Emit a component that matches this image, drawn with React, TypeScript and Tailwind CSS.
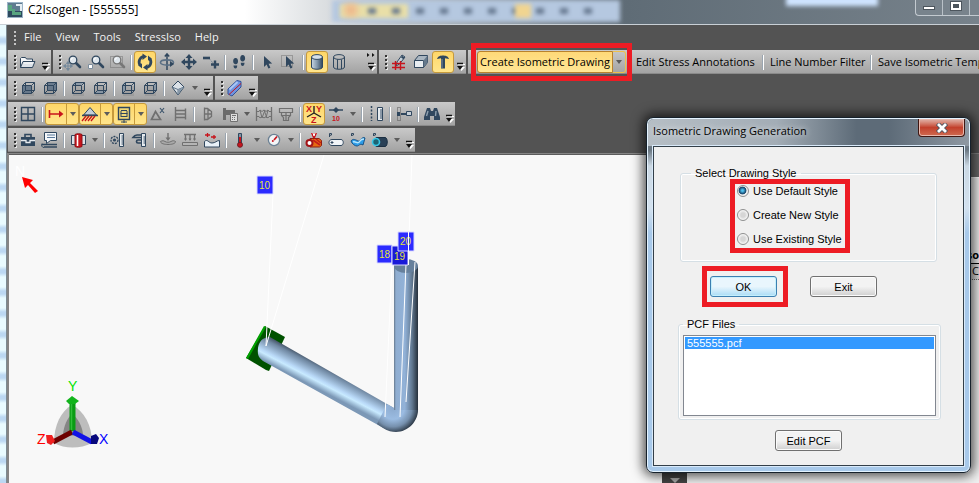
import React from "react";
import type { ReactNode } from "react";

const INK = "#30475e";
const GREY = "#707070";
const RED = "#c8141c";

function Svg({ children }: { children: ReactNode }) {
  return (
    <svg width="22" height="22" viewBox="0 0 22 22" fill="none" aria-hidden="true" className="block shrink-0">
      {children}
    </svg>
  );
}

/* A wire cube whose chosen face is shaded. */
function Cube({ face }: { face: "front" | "back" | "top" | "bottom" | "left" | "right" }) {
  const faces = {
    front: "M5 8h9v9H5z",
    back: "M8 5h9v9H8z",
    top: "M5 8L8 5h9l-3 3z",
    bottom: "M5 17l3-3h9l-3 3z",
    left: "M5 8l3-3v9l-3 3z",
    right: "M14 8l3-3v9l-3 3z",
  };
  return (
    <Svg>
      <path d="M6 9h11v10H6z" fill="#000" opacity=".08" />
      <path d={faces[face]} fill={face === "front" || face === "back" ? "#5d7186" : "#8494a4"} opacity=".85" />
      <path d="M5.500 8.500h9v8h-9zM8.500 5.500h9v8h-9zM5.500 8.500l3-3M14.500 8.500l3-3M14.500 16.500l3-3M5.500 16.500l3-3" stroke={INK} />
    </Svg>
  );
}

const lens = (cx: number, color: string) => (
  <>
    <path d={`M${cx + 3} 12l4 4`} stroke={color} strokeWidth="2.6" strokeLinecap="round" />
    <circle cx={cx} cy="9" r="3.8" fill="#dfe6ec" stroke={color} strokeWidth="1.3" />
    <path d={`M${cx - 2} 9a2 2 0 0 1 2-2`} stroke="#fff" />
  </>
);

const cursorPath = "M8 5v11l2.600-2.400 1.800 4 2-.9-1.800-3.900 3.600-.2z";

const icons: Record<string, ReactNode> = {
  open: (
    <Svg>
      <path d="M3.500 16.500v-9l1-1h4l1 1.500h6v3" fill="#f4f6f8" stroke={INK} />
      <path d="M3.500 16.500l2.500-6h12l-2.500 6z" fill="#dde3e9" stroke={INK} strokeLinejoin="round" />
      <path d="M7 12h9" stroke="#fff" />
    </Svg>
  ),
  zoomPan: (
    <Svg>
      <path d="M6 11v8M2 15h8M6 10.500l-1.500 2h3zM6 19.500l-1.500-2h3zM1.500 15l2-1.500v3zM10.500 15l-2-1.500v3z" stroke="#75899b" fill="#75899b" />
      {lens(11, INK)}
    </Svg>
  ),
  zoomWin: (
    <Svg>
      {lens(12, INK)}
      <path d="M4.500 13.500h4v4h-4z" fill="#fff" stroke="#7d8e9e" />
    </Svg>
  ),
  zoomSel: (
    <Svg>
      <path d="M4.500 5.500h12v11h-12z" stroke={GREY} strokeDasharray="1 1" />
      {lens(11, "#777")}
    </Svg>
  ),
  rotate: (
    <Svg>
      <path d="M6.500 14.500a5.500 5.500 0 0 1 3-9M15.500 7.500a5.500 5.500 0 0 1-3 9" stroke={INK} strokeWidth="2.800" />
      <path d="M8.500 2.500l4.500 3-4.500 3.500zM13.500 19.500l-4.500-3 4.500-3.500zM4 14l4-1.500v5zM18 8l-4 1.500v-5z" fill={INK} />
    </Svg>
  ),
  spin: (
    <Svg>
      <path d="M11 3v16M8.800 5.500L11 3l2.200 2.500" stroke={INK} strokeWidth="1.500" />
      <ellipse cx="11" cy="11.500" rx="6.500" ry="2.600" stroke="#5b7085" strokeWidth="1.600" />
      <path d="M14 16l4-3-4-3z" fill={INK} />
    </Svg>
  ),
  move: (
    <Svg>
      <path d="M11 5v12M5 11h12" stroke={INK} strokeWidth="2.400" />
      <path d="M11 3L7.500 7h7zM11 19l-3.500-4h7zM3 11l4-3.500v7zM19 11l-4-3.500v7z" fill={INK} />
    </Svg>
  ),
  step: (
    <Svg>
      <path d="M3 7h7" stroke={INK} strokeWidth="2.600" />
      <path d="M10 8.500l3 3.500" stroke="#63788c" strokeDasharray="1 1" />
      <path d="M15 9.500v8M11 13.500h8" stroke={INK} strokeWidth="2.400" />
    </Svg>
  ),
  feet: (
    <Svg>
      <path d="M7.300 7c1.800-.3 2.900 1.400 2.700 3.600-.2 1.900-1 2.900-2.500 2.700C5.600 13 5 11.400 5.200 9.600 5.400 8 6.200 7.100 7.300 7zM5.500 14.500h3.700c0 2-.5 3-1.700 3s-2-1-2-3zM14.500 4c1.900.1 2.700 1.700 2.600 3.600-.1 1.800-1 3-2.500 2.900-1.600 0-2.500-1.300-2.400-3.200.1-2 .9-3.300 2.300-3.300zM12.800 11.700h3.700c0 2-.6 3.200-1.900 3.200-1.200 0-1.800-1.100-1.800-3.200z" fill={INK} />
    </Svg>
  ),
  cursor: (
    <Svg>
      <path d={cursorPath} fill={INK} />
    </Svg>
  ),
  cursorBox: (
    <Svg>
      <path d="M3.500 4.500h11v11h-11z" stroke={GREY} strokeDasharray="1 1" />
      <path d={cursorPath} fill={INK} />
    </Svg>
  ),
  cylinder: (
    <Svg>
      <defs>
        <linearGradient id="cyl">
          <stop stopColor="#c9d7e4" />
          <stop offset=".5" stopColor="#8499ad" />
          <stop offset="1" stopColor="#30475e" />
        </linearGradient>
      </defs>
      <path d="M5.500 6v10c0 3 11 3 11 0V6" fill="url(#cyl)" stroke={INK} />
      <ellipse cx="11" cy="6" rx="5.500" ry="2.400" fill="#d5e0ea" stroke={INK} />
    </Svg>
  ),
  cylinderWire: (
    <Svg>
      <path d="M5.500 6v10c0 3 11 3 11 0V6M9.500 8.500V18M13.500 8.500V18" stroke={INK} />
      <ellipse cx="11" cy="6" rx="5.500" ry="2.400" stroke={INK} />
    </Svg>
  ),
  gridPen: (
    <Svg>
      <path d="M8 15l1-4 5-7 3 2-5.500 7z" fill="#c6d0d8" stroke={INK} />
      <path d="M13.500 5.500l2.500 2" stroke={INK} strokeWidth="2" />
      <path d="M4 12.500h13M4 16.500h13M7.500 10v9M12.500 10v9" stroke={RED} strokeWidth="1.400" />
    </Svg>
  ),
  box: (
    <Svg>
      <path d="M4.500 9.500l4-5h9v7l-4 5h-9z" fill="#aab6c1" stroke={INK} />
      <path d="M4.500 9.500h9v7h-9z" fill="#e8edf1" stroke={INK} />
      <path d="M13.500 9.500l4-5v7l-4 5z" fill="#65798c" />
    </Svg>
  ),
  hammer: (
    <Svg>
      <path d="M5 8c1-3 3.500-3.500 6-3.500S16 5 17 8l-4-.8v10.300H9V7.200z" fill={INK} />
      <path d="M10 8v9" stroke="#7e90a1" />
    </Svg>
  ),
  iso: (
    <Svg>
      <path d="M11 4l6 6-6 8-6-8z" fill="#dbe1e7" stroke={INK} />
      <path d="M5 10l6 2.500 6-2.500M11 12.500V18" stroke="#60768b" />
      <path d="M11 12.500l5.500-2.200L11 17.500z" fill="#8798a8" />
    </Svg>
  ),
  pipe: (
    <Svg>
      <path d="M4 12L13 3.500l4 1V10l-9 9-4-2z" fill="#6f94df" stroke="#315199" />
      <path d="M5.500 12.500l8-7.500" stroke="#a9c5f5" strokeWidth="2" />
      <path d="M5 17.500l12-11" stroke={RED} />
    </Svg>
  ),
  grid: (
    <Svg>
      <path d="M4.500 4.500h13v13h-13zM11 4.500v13M4.500 11h13" stroke={INK} strokeWidth="1.400" />
    </Svg>
  ),
  dim: (
    <Svg>
      <path d="M4.500 7v8M4.500 11h12" stroke={RED} strokeWidth="1.600" />
      <path d="M14 7.500l4.500 3.500-4.500 3.500z" fill={RED} />
    </Svg>
  ),
  anchor: (
    <Svg>
      <path d="M11 4.500l6.500 7.500h-13z" fill="#c4ced8" stroke={INK} />
      <path d="M3 12.500h16" stroke={INK} strokeWidth="1.500" />
      <path d="M7 13l-4 5M10 13l-4 5M13 13l-4 5M16 13l-4 5" stroke={RED} strokeWidth="1.300" />
    </Svg>
  ),
  screen: (
    <Svg>
      <path d="M5.500 4.500h11v12h-11z" fill="#f0d878" stroke={INK} strokeWidth="1.400" />
      <path d="M8 7.500h6M7.500 10.500h7M7.500 13.500h7M8 8v5M14 8v5" stroke={INK} />
      <path d="M11 17v3M8 19h6" stroke={INK} />
    </Svg>
  ),
  delta: (
    <Svg>
      <path d="M4.500 16.500l4-8 5 8z" stroke={GREY} strokeWidth="1.700" />
      <path d="M13 5l4 5M17 5l-4 5" stroke="#3e566d" strokeWidth="1.200" />
    </Svg>
  ),
  flange: (
    <Svg>
      <path d="M6.500 4v14M6.500 7.500h10v-2M6.500 14.500h10v2M16.500 7.500v7M6.500 11h10" stroke={GREY} strokeWidth="1.400" />
    </Svg>
  ),
  halfFlange: (
    <Svg>
      <path d="M7.500 4.500v13M7.500 5.500h3l4 3v5l-4 3h-3M11 5.500v11M7.500 11H14" stroke={GREY} strokeWidth="1.300" />
    </Svg>
  ),
  calc: (
    <Svg>
      <path d="M4 5h3v12H4zM7 7h9v5H7z" fill="#6b6b6b" />
      <path d="M11.500 10.500h7v8h-7z" fill="#ddd" stroke={GREY} />
      <path d="M13 12.500h4M13 14.500h1M15 14.500h1M13 16.500h1M15 16.500h1" stroke={GREY} />
    </Svg>
  ),
  bellows: (
    <Svg>
      <path d="M3.500 4v14M18.500 4v14" stroke={GREY} strokeWidth="1.300" />
      <path d="M4 8.500h2l1-1.500 2 1.500L11 7l2 1.500L15 7l1 1.500h2M4 13.500h2L7 15l2-1.500 2 1.500 2-1.500 2 1.500 1-1.500h2M7 7l2 8M9 15l3-8M11 7l3 8M13 15l2-8" stroke={GREY} />
    </Svg>
  ),
  tee: (
    <Svg>
      <path d="M4.500 5.500h13v4h-13zM6.500 9.500v3l2 2v3h5v-3l2-2v-3M6.500 12.500h9M11 10v7" stroke={GREY} strokeWidth="1.200" />
    </Svg>
  ),
  axes: (
    <Svg>
      <path d="M11 3v7M11 10l-7 4M11 10l7 4" stroke="#222" strokeWidth="1.400" />
      <g fill={RED} fontFamily="Liberation Sans, sans-serif" fontWeight="700" fontSize="9">
        <text x="3" y="9">X</text>
        <text x="13" y="9">Y</text>
        <text x="8" y="20">Z</text>
      </g>
    </Svg>
  ),
  node10: (
    <Svg>
      <path d="M4 7h14" stroke={INK} strokeWidth="1.500" />
      <path d="M8 7l3-3 3 3-3 3z" fill={INK} />
      <text x="7" y="18" fill={RED} fontFamily="Liberation Sans, sans-serif" fontWeight="700" fontSize="7">10</text>
    </Svg>
  ),
  rule: (
    <Svg>
      <path d="M6.500 3v15" stroke={INK} strokeDasharray="2 1.500" strokeWidth="1.500" />
      <path d="M12.500 4.500h5v13h-5z" fill="#e6ebef" stroke={INK} />
      <path d="M15 7h2M15 9h2M15 11h2M15 13h2M15 15h2" stroke={INK} />
    </Svg>
  ),
  bracket: (
    <Svg>
      <path d="M4.500 4.500h3v13h-3z" stroke="#555" strokeDasharray="1 1" />
      <path d="M4 9h3v4H4z" fill={INK} />
      <path d="M8 10h8v2H8z" fill={INK} />
      <path d="M13.500 8.500h5v4h-5z" fill="#c7d0d8" stroke={INK} />
    </Svg>
  ),
  find: (
    <Svg>
      <path d="M6 5h3l1 3h2l1-3h3l3 9v3h-6v-4h-4v4H3v-3z" fill={INK} />
      <path d="M5.500 13l1.500-5M14.500 13l.5-5" stroke="#8fa0af" strokeWidth="1.400" />
    </Svg>
  ),
  kit: (
    <Svg>
      <path d="M8 8V5.500h6V8" stroke={INK} strokeWidth="1.600" />
      <path d="M4 8h14v9H4z" fill={INK} />
      <path d="M4 11.500h5v2h4v-2h5" stroke="#e5eaef" strokeWidth="1.300" />
    </Svg>
  ),
  note: (
    <Svg>
      <path d="M5.500 3.500h12v8h-6l-4 3v-3h-2z" fill="#f4f7fa" stroke={INK} />
      <path d="M8 6h8M8 8.500h8" stroke="#58789a" />
      <path d="M3 15.500h15M5 18h13" stroke={INK} strokeWidth="1.700" />
      <path d="M3 14.500c-1 2 0 4 2 4" stroke={INK} />
    </Svg>
  ),
  weld: (
    <Svg>
      <path d="M4.500 6.500h4v9h-4zM14.500 6.500h4v9h-4z" fill="#dbe2e8" stroke={INK} />
      <path d="M8 5.500c1-1 6-1 7 0v12c-1 1-6 1-7 0z" fill={RED} stroke="#8b1017" />
      <path d="M10.500 6v11" stroke="#fff" strokeWidth="1.600" />
    </Svg>
  ),
  ringRule: (
    <Svg>
      <circle cx="7.500" cy="11" r="3.500" stroke={INK} strokeWidth="1.300" strokeDasharray="2 1" />
      <circle cx="7.500" cy="11" r="1.600" fill={INK} />
      <path d="M12.500 4.500h4v13h-4z" fill="#e6ebef" stroke={INK} />
      <path d="M14.500 7h2M14.500 9h2M14.500 11h2M14.500 13h2M14.500 15h2" stroke={INK} />
    </Svg>
  ),
  caliper: (
    <Svg>
      <path d="M12.500 4.500h4v13h-4z" fill="#e6ebef" stroke={INK} />
      <path d="M12.500 6H8c-2 0-3 1-4 2.500h8M12.500 14H9c-2 0-2-3 0-3h3.500" stroke={INK} strokeWidth="1.700" />
      <path d="M14.500 8h2M14.500 10h2M14.500 12h2M14.500 14h2" stroke={INK} />
    </Svg>
  ),
  pointLoad: (
    <Svg>
      <path d="M3.500 12.500c2-1 3-1 4.500 0s4.500 1 6 0 3-1 4.500 0c.5 4-15 4-15 0z" fill="#a9a9a9" stroke={GREY} />
      <path d="M11 4v6" stroke={GREY} strokeWidth="1.400" />
      <path d="M8.500 8.500L11 12l2.500-3.500z" fill={GREY} />
    </Svg>
  ),
  lineLoad: (
    <Svg>
      <path d="M5 5.500h12M6.500 6v5M11 6v5M15.500 6v5" stroke={GREY} strokeWidth="1.300" />
      <path d="M5 9.500l1.500 2.500L8 9.500zM9.500 9.500L11 12l1.500-2.500zM14 9.500l1.500 2.500L17 9.500z" fill={GREY} />
      <path d="M3.500 13.500h15v3h-15z" fill="#b5b5b5" stroke={GREY} />
    </Svg>
  ),
  wave: (
    <Svg>
      <path d="M4 6h5M6.500 4v4M10 8h5M13 6v4" stroke={RED} strokeWidth="1.300" />
      <path d="M3.500 18v-5.500c3-3 4 1.500 7.500 1.500s4.500-2.500 7.500-2.500V18z" fill="#e9f1f8" stroke={INK} />
    </Svg>
  ),
  thermo: (
    <Svg>
      <path d="M9.500 4.500h3V14h-3z" fill="#8192a3" stroke={INK} />
      <path d="M11 8v7" stroke={RED} strokeWidth="2" />
      <circle cx="11" cy="15.800" r="2.500" fill={RED} stroke="#6d2028" />
    </Svg>
  ),
  gauge: (
    <Svg>
      <circle cx="11" cy="11" r="5.600" fill="#f3f5f7" stroke="#6b8094" strokeWidth="1.300" />
      <path d="M11 11l3-3.500" stroke={RED} strokeWidth="1.700" />
      <circle cx="9.800" cy="12" r="1" fill={RED} />
    </Svg>
  ),
  redPipe: (
    <Svg>
      <path d="M7 9.500h9l2.500 2v5l-2 1.500H7z" fill="#e66a12" stroke="#8d1e10" />
      <path d="M10 11l7 5M13 10l5 4" stroke="#c21b1b" strokeWidth="1.600" />
      <circle cx="6.500" cy="14" r="3" fill="#fff" stroke="#a21317" strokeWidth="2" />
      <path d="M8 4h6l-2 5h-2z" fill={RED} />
      <path d="M10 4l1 3 1-3" stroke="#fff" />
    </Svg>
  ),
  whitePipe: (
    <Svg>
      <path d="M4.500 8V4.500h2V6l-2 .5" stroke={INK} />
      <path d="M7 10.500h9c3 0 3 6 0 6H7c-4 0-4-6 0-6z" fill="#f2f5f8" stroke={INK} />
      <path d="M7 12v3M5.500 13.500h3" stroke={INK} />
    </Svg>
  ),
  bluePipe: (
    <Svg>
      <path d="M4.500 7V4.500h2V6l-2 .5" stroke={INK} />
      <path d="M4 12c2-3 5-1 7 0s4-5 7-3l-2 7c-3-2-4 1-6 1s-5-2-6-5z" fill="#2e9de8" stroke="#175186" />
      <path d="M6 13c3-1 5 3 7-1 1-2 2-2 4-2" stroke="#b5e7ff" strokeWidth="1.500" />
    </Svg>
  ),
  darkPipe: (
    <Svg>
      <path d="M4.500 7V4.500h2V6l-2 .5" stroke={INK} />
      <path d="M7 8.500h9c3 0 3 9 0 9H7z" fill="#2a4056" stroke="#1c2f42" />
      <circle cx="7" cy="13" r="3.500" fill="#1d6474" stroke="#3ac7e6" strokeWidth="1.600" />
    </Svg>
  ),
};

type Item = string;

/* "|" is a separator, "v" a drop-down arrow, "*name" a pressed button, "*name+v" a pressed split button. */
const rows: { wide?: boolean; items: Item[] }[][] = [
  [
    { items: ["open"] },
    { wide: true, items: ["zoomPan", "zoomWin", "zoomSel", "|", "*rotate", "spin", "move", "step", "|", "feet", "|", "cursor", "cursorBox", "|", "*cylinder", "cylinderWire"] },
    { items: ["gridPen", "box", "*hammer"] },
  ],
  [
    { items: ["cube-front", "cube-back", "|", "cube-top", "cube-bottom", "|", "cube-left", "cube-right", "|", "iso", "v"] },
    { items: ["pipe"] },
  ],
  [
    {
      items: ["grid", "|", "*dim+v", "*anchor+v", "*screen+v", "delta", "flange", "|", "halfFlange", "calc", "v", "bellows", "tee", "|", "*axes", "node10", "v", "|", "rule", "|", "bracket", "|", "find"],
    },
  ],
  [
    {
      items: ["kit", "note", "|", "weld", "v", "|", "ringRule", "caliper", "|", "pointLoad", "lineLoad", "wave", "|", "thermo", "v", "gauge", "v", "|", "redPipe", "whitePipe", "bluePipe", "darkPipe", "v"],
    },
  ],
];

function iconFor(name: string): ReactNode {
  if (name.startsWith("cube-")) {
    return <Cube face={name.slice(5) as "front"} />;
  }
  return icons[name];
}

function Arrow() {
  return (
    <svg width="6" height="4" viewBox="0 0 6 4" aria-hidden="true">
      <path d="M0 0h6L3 4z" fill="#5c5c5c" />
    </svg>
  );
}

function Handle({ light = false }: { light?: boolean }) {
  return (
    <span className="flex w-[9px] shrink-0 flex-col items-center gap-0.5 self-center pl-1">
      {[0, 1, 2, 3].map((n) => (
        <span key={n} className={"h-0.5 w-0.5 " + (light ? "bg-[#c4c4c4]" : "bg-[#333] shadow-[1px_1px_0_#e8e8e8]")} />
      ))}
    </span>
  );
}

function Separator() {
  return <span className="mx-0.5 h-[15px] w-0.5 shrink-0 self-center border-l border-[#9aa5b0] bg-white" />;
}

function Overflow({ more = false }: { more?: boolean }) {
  return (
    <button aria-label="Toolbar options" className="flex w-3 shrink-0 flex-col items-center justify-end pb-0.5">
      <svg width="10" height="18" viewBox="0 0 10 18" aria-hidden="true">
        {more && <path d="M1 0l2.500 2L1 4zM6 0l2.500 2L6 4z" fill="#111" />}
        <path d="M3 11.500h7" stroke="#fff" />
        <path d="M2 10.500h6" stroke="#111" strokeWidth="1.500" />
        <path d="M3 14h7l-3.500 4z" fill="#fff" />
        <path d="M2 13h6l-3 4z" fill="#111" />
      </svg>
    </button>
  );
}

const pressed = "rounded-[3px] border border-[#c69a3c] bg-linear-to-b from-[#ffd768] to-[#ffe58c]";

function ToolItem({ item }: { item: Item }) {
  if (item === "|") return <Separator />;
  if (item === "v") {
    return (
      <button aria-label="More" className="flex w-3 shrink-0 items-center justify-center">
        <Arrow />
      </button>
    );
  }
  const on = item.startsWith("*");
  const split = item.endsWith("+v");
  const name = item.replace("*", "").replace("+v", "");
  if (split) {
    return (
      <span className={"flex w-[34px] shrink-0 " + pressed}>
        <button aria-label={name} className="flex w-[21px] items-center justify-center border-r border-[#c69a3c]">
          {iconFor(name)}
        </button>
        <button aria-label={name + " options"} className="flex w-[11px] items-center justify-center">
          <Arrow />
        </button>
      </span>
    );
  }
  return (
    <button aria-label={name} aria-pressed={on} className={"flex w-[22px] shrink-0 items-center justify-center " + (on ? pressed : "")}>
      {iconFor(name)}
    </button>
  );
}

const panel = "flex h-6 border-b border-[#8a8a8a] bg-linear-to-b from-[#c9c9c9] to-[#a3a3a3] pt-px";

function StylePanel() {
  const textButton = "shrink-0 pl-1 text-left";
  return (
    <div className={panel + " min-w-0 flex-1 pl-[9px] text-[11px] whitespace-nowrap text-black"}>
      <div className="relative flex shrink-0">
        <button className="w-[136px] rounded-l-[3px] border border-[#b9822c] bg-linear-to-b from-[#ffd978] to-[#ffe694]">
          Create Isometric Drawing
        </button>
        <button aria-label="Drawing options" className="flex w-[13px] items-center justify-center rounded-r-[3px] border border-l-0 border-[#eec04b]">
          <Arrow />
        </button>
        <span className="pointer-events-none absolute -inset-x-1.5 -inset-y-2 border-5 border-[#ed1c24]" />
      </div>
      <button className={textButton + " ml-1.5 w-32"}>Edit Stress Annotations</button>
      <Separator />
      <button className={textButton + " w-[102px]"}>Line Number Filter</button>
      <Separator />
      <button className={textButton}>Save Isometric Temp</button>
    </div>
  );
}

function TitleBar() {
  return (
    <header className="relative flex h-[25px] shrink-0 items-center overflow-hidden border-b border-[#c9d0d6] bg-linear-to-r from-white from-25% via-[#5f6c76] via-[64%] to-[#77828b] pl-[7px]">
      <span className="absolute top-0 left-[332px] h-[22px] w-[288px] bg-[#b5c8e0] blur-[2px]" />
      <span className="absolute top-1 left-[340px] h-3.5 w-[68px] bg-[#e9dfa8] blur-[2px]" />
      <span className="absolute top-1 left-[345px] h-3 w-3 bg-[#eeb98d] blur-[3px]" />
      <span className="absolute top-2 left-[368px] h-1.5 w-[240px] bg-[repeating-linear-gradient(90deg,#66788f_0_8px,transparent_8px_24px)] blur-[2px]" />
      <span className="absolute top-1 left-[515px] h-3.5 w-4 bg-[#f1d590] blur-[2px]" />
      <span className="absolute -top-1 left-[786px] h-2.5 w-[92px] bg-[#cfe4ff] blur-[2px]" />
      <svg width="16" height="16" viewBox="0 0 16 16" className="relative -mt-1 shrink-0" aria-hidden="true">
        <path d="M0 0h16v16H0z" fill="#9bb3c6" />
        <path d="M1 1h14v14H1z" fill="#5f7b90" />
        <path d="M1 9h14v6H1z" fill="#2d4a5e" />
        <path d="M1 3h4v4h3v3h6v3H5V9H1z" fill="#57a480" />
        <path d="M9 2h6v7h-2V4H9z" fill="#e4edf3" />
      </svg>
      <h1 className="relative -mt-1 pl-[5px] text-xs text-black">C2Isogen - [555555]</h1>
      <div className="absolute top-0 right-0 flex h-4 w-16 rounded-bl-[4px] border-b border-l border-[#c3cad0] bg-[#78838c]">
        <button aria-label="Minimize" className="flex w-[27px] items-start justify-center border-r border-[#b9c1c8] pt-1.5">
          <span className="h-1 w-3 border border-[#4c555d] bg-white" />
        </button>
        <button aria-label="Maximize" className="flex w-[27px] items-start justify-center border-r border-[#b9c1c8] pt-0.5">
          <span className="h-2 w-2.5 border-2 border-white bg-[#4c555d] outline outline-[#4c555d]" />
        </button>
      </div>
    </header>
  );
}

function Model() {
  return (
    <svg width="640" height="328" viewBox="9 155 640 328" className="block" role="img" aria-label="Pipe model">
      <defs>
        <linearGradient id="riser">
          <stop stopColor="#65788c" />
          <stop offset=".08" stopColor="#8fadd0" />
          <stop offset=".45" stopColor="#92b2d8" />
          <stop offset=".75" stopColor="#617890" />
          <stop offset="1" stopColor="#26303b" />
        </linearGradient>
        <linearGradient id="run" gradientUnits="userSpaceOnUse" x1="332" y1="367" x2="320" y2="390">
          <stop stopColor="#2c3846" />
          <stop offset=".25" stopColor="#7088a2" />
          <stop offset=".65" stopColor="#b9d9f8" />
          <stop offset=".75" stopColor="#c8eaff" />
          <stop offset="1" stopColor="#7c98b6" />
        </linearGradient>
        <radialGradient id="elbow" gradientUnits="userSpaceOnUse" cx="393" cy="408" r="25">
          <stop stopColor="#8caace" />
          <stop offset=".45" stopColor="#9bbce2" />
          <stop offset=".75" stopColor="#7690ad" />
          <stop offset="1" stopColor="#303d4b" />
        </radialGradient>
      </defs>

      <text x="15" y="176" fontSize="14" fill="#ffffff" fontFamily="Liberation Sans, sans-serif">N</text>
      <path d="M22 177l11 3-3 3 8 8-3 2-7-8-3 3z" fill="#ff0000" />

      <path d="M265 326l20 11-16 34-3-1-20-12z" fill="#005200" />
      <path d="M264 326l2 1-18 32-2-1z" fill="#00a000" />
      <path d="M270 337l124 71-7 22-124-69c-3-3-6-4-5-13 1-6 4-11 12-11z" fill="url(#run)" />
      <path d="M394 408h24c1 13-10 24-22 24-4 0-8-1-13-4l-6-4 10-20z" fill="url(#elbow)" />
      <path d="M394 266h24v144h-24z" fill="url(#riser)" />
      <ellipse cx="406" cy="266" rx="12" ry="7" fill="#66809c" />

      <path d="M273 194l-7 152M324 155l-58 191M412 155l-4 110M392 264l-7 153M406 264l-6 153M415 262l-9 140" stroke="#ffffff" />
      <g fill="#2b2bff" stroke="#d9d9ff">
        <path d="M257 176h16v18h-16z" />
        <path d="M377 245h15v18h-15z" />
        <path d="M392 246h16v19h-16z" fill="#1919d8" />
        <path d="M398 232h16v19h-16z" />
      </g>
      <g fill="#e4e43c" fontSize="10" fontFamily="Liberation Sans, sans-serif">
        <text x="259" y="189">10</text>
        <text x="379" y="258">18</text>
        <text x="394" y="260">19</text>
        <text x="400" y="245">20</text>
      </g>
      <path d="M408.500 232v33" stroke="#fff" />

      <path d="M72 405c12 6 20 20 20 38-12 6-27 6-38 0 0-18 7-32 18-38z" fill="#bdbdbd" />
      <path d="M72 414c6 4 10 12 11 20-7 2-15 2-20 0 1-8 4-16 9-20z" fill="#858585" />
      <path d="M72.500 403v28" stroke="#0a9c14" strokeWidth="6" />
      <path d="M71.500 403v27" stroke="#31bd39" strokeWidth="1.500" />
      <path d="M72 396l7 5-4 3h-6l-3-3z" fill="#12b41c" />
      <path d="M72 432l-19 10" stroke="#6d0000" strokeWidth="5" />
      <path d="M73 432l19 10" stroke="#1212e6" strokeWidth="5" />
      <path d="M46 435l6 0 3 6-4 4-4-2z" fill="#ef2020" />
      <path d="M91 436l5-2 3 4-2 6-6 0z" fill="#08087c" />
      <g fontSize="14" fontFamily="Liberation Sans, sans-serif">
        <text x="68" y="391" fill="#00e400">Y</text>
        <text x="37" y="444" fill="#ff0000">Z</text>
        <text x="99" y="444" fill="#0000ff">X</text>
      </g>
    </svg>
  );
}

const dialogButton =
  "relative h-[21px] w-[67px] rounded-[3px] border border-[#707070] bg-linear-to-b from-[#f3f3f3] from-50% to-[#cfcfcf] shadow-[inset_0_0_0_1px_#fbfbfb]";

function Dialog() {
  const styles = ["Use Default Style", "Create New Style", "Use Existing Style"];
  return (
    <section
      role="dialog"
      aria-labelledby="dialog-title"
      className="absolute top-[117px] right-2 flex w-[325px] flex-col rounded-[7px] border border-[#16212b] bg-[linear-gradient(180deg,#8d98a2_0,#6b7883_32px,#cbd8e3_48px,#d3e1ee_90px,#a8c9ea_115px)] px-1.5 pb-1.5 shadow-[inset_0_0_0_1px_#e4f3ff,0_0_12px_3px_#000000b0]"
    >
      <header className="mx-[-5px] mt-px flex h-[27px] justify-between rounded-t-[6px] bg-[linear-gradient(90deg,#b6bec5_0,#a3adb6_40%,#5d6b78_65%,#5d6b78_75%,#8e98a2_100%)] pr-1 pl-[5px]">
        <h2 id="dialog-title" className="-mt-0.5 self-center text-[11px] text-black [text-shadow:0_0_6px_#fff]">
          Isometric Drawing Generation
        </h2>
        <button
          aria-label="Close"
          className="flex h-[18px] w-[47px] items-center justify-center rounded-b-[4px] border border-t-0 border-[#3f1712] bg-linear-to-b from-[#dca195] from-10% via-[#c2402c] via-50% to-[#ce6a50] shadow-[inset_0_0_0_1px_#e9b9ae]"
        >
          <svg width="12" height="10" viewBox="0 0 12 10" aria-hidden="true">
            <path d="M1.500 0.500l9 9M10.500 0.500l-9 9" stroke="#4e5560" strokeWidth="4.500" />
            <path d="M2 1l8 8M10 1L2 9" stroke="#fff" strokeWidth="2.800" />
          </svg>
        </button>
      </header>
      <div className="flex flex-col border border-[#333f49] bg-[#f0f0f0] px-6 pt-5 pb-3.5 font-['Liberation_Sans',Arial,sans-serif] text-[11px] leading-3 text-black outline outline-[#d9eafa]">
        <fieldset className="mx-0.5 rounded-[3px] border border-[#d5dfe5] pt-1 pb-3.5 pl-14 shadow-[inset_0_0_0_1px_#fff]">
          <legend className="-ml-[46px] px-1">Select Drawing Style</legend>
          <div className="relative flex w-[106px] flex-col gap-2">
            {styles.map((label, i) => (
              <label key={label} className="flex h-4 items-center gap-1 whitespace-nowrap">
                <input
                  type="radio"
                  name="style"
                  defaultChecked={i === 0}
                  className="h-3 w-3 shrink-0 appearance-none rounded-full border border-[#8e8f8f] bg-[radial-gradient(circle,#d6d6d6_30%,#f8f8f8_70%)] checked:bg-[radial-gradient(circle_at_45%_45%,#4fc1ee_10%,#123f66_45%,#f0f0f0_55%)]"
                />
                {label}
              </label>
            ))}
            <span className="pointer-events-none absolute -inset-x-[7px] -top-1 -bottom-1.5 border-5 border-[#ed1c24]" />
          </div>
        </fieldset>
        <div className="mt-3.5 flex gap-[33px] pl-8">
          <button className="relative h-[21px] w-[67px] rounded-[3px] border border-[#3c7fb1] bg-linear-to-b from-[#e9f6fd] from-50% to-[#a9dbf5] shadow-[inset_0_0_0_1px_#c5effc]">
            OK
            <span className="pointer-events-none absolute -inset-y-[11px] -right-3 -left-[9px] border-5 border-[#ed1c24]" />
          </button>
          <button className={dialogButton}>Exit</button>
        </div>
        <fieldset className="mt-[21px] -mr-0.5 rounded-[3px] border border-[#d5dfe5] px-1 pt-[5px] pb-[3px] shadow-[inset_0_0_0_1px_#fff]">
          <legend className="px-1">PCF Files</legend>
          <select size={5} aria-label="PCF Files" className="block h-[81px] w-full appearance-none overflow-hidden border border-[#828790] bg-white p-px">
            <option className="min-h-0 bg-[#3399ff] px-0.5 py-0 text-[11px] leading-[13px] text-white">555555.pcf</option>
          </select>
        </fieldset>
        <button className={dialogButton + " mt-2.5 self-center"}>Edit PCF</button>
      </div>
    </section>
  );
}

export default function App() {
  return (
    <div className="relative flex h-screen flex-col overflow-hidden bg-[#535353] font-['Open_Sans','Noto_Sans',sans-serif]">
      <TitleBar />
      <div className="flex min-h-0 flex-1">
        <div className="w-[7px] shrink-0 border-r border-[#7d8b93] bg-[repeating-linear-gradient(180deg,#e9fbff_0_10px,#bcd8f2_14px_17px,#e9fbff_21px)]" />
        <main className="flex min-w-0 flex-1 flex-col">
          <nav className="flex h-[25px] shrink-0 items-center gap-3.5 pl-px text-[11px] text-[#f2f2f2]">
            <span className="-mr-[7px] flex">
              <Handle light />
            </span>
            {["File", "View", "Tools", "StressIso", "Help"].map((m) => (
              <button key={m}>{m}</button>
            ))}
          </nav>
          <div className="flex shrink-0 flex-col gap-0.5 pl-px">
            {rows.map((groups, r) => (
              <div key={r} className="flex gap-0.5">
                {groups.map((g, i) => (
                  <div key={i} className={panel}>
                    <Handle />
                    {g.items.map((item, n) => (
                      <ToolItem key={n} item={item} />
                    ))}
                    {g.wide && <span className="w-[15px]" />}
                    <Overflow more={g.wide} />
                  </div>
                ))}
                {r === 0 && <StylePanel />}
              </div>
            ))}
          </div>
          <div className="mt-px flex min-h-0 flex-1 border-t border-l-2 border-[#858585]">
            <div className="relative min-w-0 flex-1 overflow-hidden border-t border-[#5c5c5c] bg-[#f8f8f8]">
              <Model />
            </div>
            <aside className="flex w-[317px] shrink-0 flex-col bg-[#f0f0f0]">
              <div className="h-[23px] shrink-0 bg-[#6a6a6a]" />
              <div className="h-[71px] shrink-0 border-t border-white" />
              <div className="flex h-4 shrink-0 items-center justify-end border-b border-black text-[11px] font-bold">so</div>
              <div className="flex h-4 shrink-0 items-center justify-end border-b border-dotted border-[#666] bg-[#e0e0e0] text-[11px]">C</div>
              <div className="flex flex-1 items-end">
                <div className="flex h-[30px] w-[25px] items-end justify-center bg-[#444]">
                  <svg width="10" height="5" viewBox="0 0 10 5" aria-hidden="true">
                    <path d="M0 0h10L5 5z" fill="#aaa" />
                  </svg>
                </div>
              </div>
            </aside>
          </div>
        </main>
      </div>
      <Dialog />
    </div>
  );
}
